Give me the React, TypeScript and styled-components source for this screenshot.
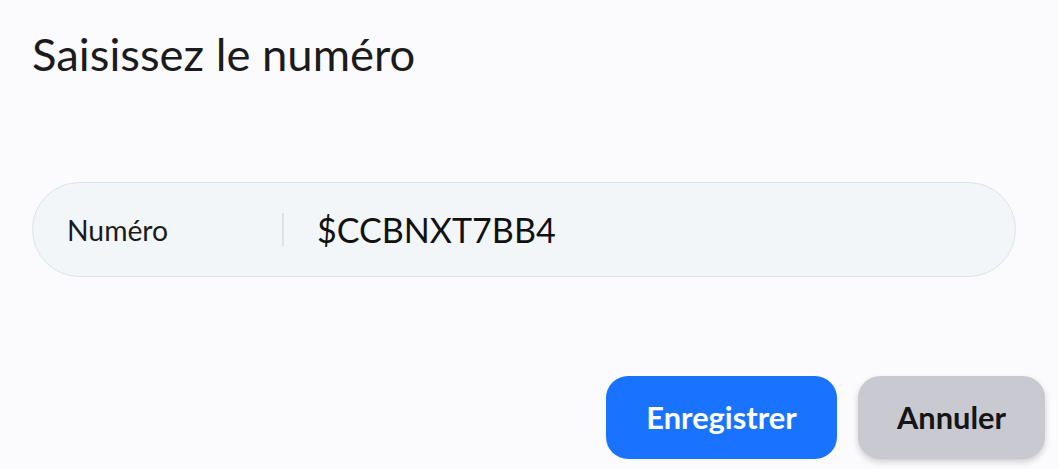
import React from "react";
import styled, { createGlobalStyle } from "styled-components";

const Global = createGlobalStyle`
  html, body { margin: 0; padding: 0; background: #fbfbfd; }
  body { font-family: Lato, "Noto Sans", sans-serif; color: #1a1a1a; }
  * { box-sizing: border-box; }
`;

const Dialog = styled.div`
  width: 1058px;
  height: 469px;
  background: #fbfbfd;
  padding: 24px 13px 10px 32px;
  display: flex;
  flex-direction: column;
`;

const Title = styled.h1`
  margin: 0;
  font-family: Lato, sans-serif;
  font-weight: 400;
  font-size: 45.4px;
  line-height: 60px;
  color: #1b1b1d;
`;

const Field = styled.div`
  margin-top: 98px;
  width: 984px;
  height: 95px;
  border: 1.5px solid #dde3e8;
  border-radius: 48px;
  background: #f3f6f8;
  display: flex;
  align-items: center;
  padding-left: 34px;
`;

const Label = styled.span`
  width: 215px;
  font-family: Lato, sans-serif;
  font-size: 28.3px;
  color: #1b1b1d;
`;

const Divider = styled.span`
  width: 2px;
  height: 33px;
  background: #dde3e8;
  margin-right: 33px;
`;

const Value = styled.span`
  font-family: Lato, sans-serif;
  font-size: 34.1px;
  color: #111;
`;

const Actions = styled.div`
  margin-top: auto;
  display: flex;
  justify-content: flex-end;
  gap: 21px;
`;

const Button = styled.button<{ $primary?: boolean }>`
  height: 83px;
  border: none;
  border-radius: 22px;
  font-family: Lato, sans-serif;
  font-weight: 700;
  font-size: 30.8px;
  cursor: pointer;
  background: ${(p) => (p.$primary ? "#1a73ff" : "#c8c9d1")};
  color: ${(p) => (p.$primary ? "#ffffff" : "#151515")};
  width: ${(p) => (p.$primary ? "231px" : "187px")};
  box-shadow: ${(p) => (p.$primary ? "none" : "0 3px 6px rgba(0,0,0,0.18)")};
`;

export default function App() {
  return (
    <>
      <Global />
      <Dialog>
        <Title>Saisissez le numéro</Title>
        <Field>
          <Label>Numéro</Label>
          <Divider />
          <Value>$CCBNXT7BB4</Value>
        </Field>
        <Actions>
          <Button $primary>Enregistrer</Button>
          <Button>Annuler</Button>
        </Actions>
      </Dialog>
    </>
  );
}
